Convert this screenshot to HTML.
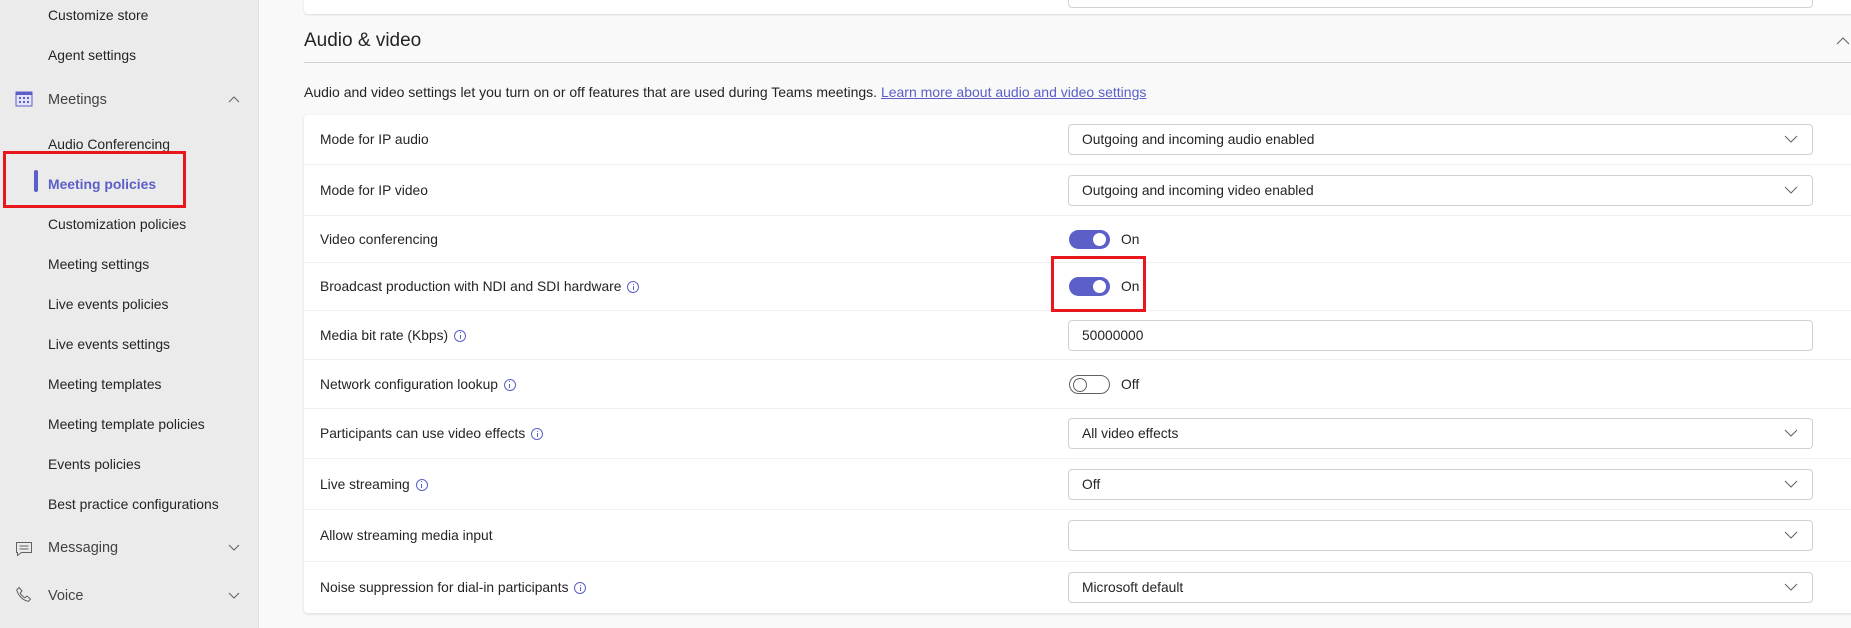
<!DOCTYPE html>
<html><head><meta charset="utf-8"><style>
*{box-sizing:border-box;margin:0;padding:0}
body{width:1851px;height:628px;overflow:hidden;font-family:"Liberation Sans",sans-serif;color:#242424;background:#f9f9f9;position:relative;font-size:14px}
.side{position:absolute;left:0;top:0;width:259px;height:628px;background:#ebebeb;border-right:1px solid #e0e0e0}
.si{position:absolute;left:48px;font-size:13.9px;color:#242424;line-height:18px}
.grp{font-size:14.5px;color:#424242}
.ic{position:absolute;left:15px}
.chev{position:absolute;left:228px}
.main{position:absolute;left:259px;top:0;right:0;bottom:0}
.topcard{position:absolute;left:45px;top:-10px;width:1600px;height:24px;background:#fff;border-radius:4px;box-shadow:0 1px 2px rgba(0,0,0,.12)}
.topdd{position:absolute;left:809px;top:-10px;width:745px;height:18px;border:1px solid #d1d1d1;border-radius:4px;background:#fff}
h2{position:absolute;left:45px;top:30px;font-size:19px;font-weight:normal;color:#242424}
.hl{position:absolute;left:45px;right:0;top:62px;border-top:1px solid #d1d1d1}
.desc{position:absolute;left:45px;top:84px;font-size:14px}
.desc a{color:#5b5fc7;text-decoration:underline}
.card{position:absolute;left:45px;top:115px;right:-10px;height:498px;background:#fff;border-radius:4px;box-shadow:0 1px 3px rgba(0,0,0,.12)}
.row{position:relative;border-bottom:1px solid #f0f0f0;display:flex;align-items:center}
.row:last-child{border-bottom:none}
.lbl{position:absolute;left:16px;font-size:13.8px}
.info{display:inline-block;width:12px;height:12px;border:1px solid #5b5fc7;border-radius:50%;vertical-align:-2px;margin-left:6px;position:relative}
.info:after{content:"";position:absolute;left:4.5px;top:4px;width:1px;height:4px;background:#5b5fc7}
.info:before{content:"";position:absolute;left:4.5px;top:1.5px;width:1px;height:1px;background:#5b5fc7}
.dd{position:absolute;left:764px;width:745px;height:31px;border:1px solid #d1d1d1;border-radius:4px;padding-left:13px;line-height:29px;font-size:13.8px}
.dd svg{position:absolute;right:14px;top:10px}
.tg{position:absolute;left:765px;width:41px;height:19px;border-radius:10px;background:#5b5fc7}
.tg:after{content:"";position:absolute;right:4px;top:3px;width:13px;height:13px;border-radius:50%;background:#fff}
.tg.off{background:#fff;border:1px solid #616161}
.tg.off:after{left:3px;right:auto;top:2px;background:#fff;border:1px solid #616161;width:12px;height:12px}
.tt{position:absolute;left:817px;font-size:13.8px}
.red{position:absolute;border:3px solid #e8161d}
</style></head><body>
<div class="side">
<div class="si" style="top:6px">Customize store</div>
<div class="si" style="top:46px">Agent settings</div>
<svg class="ic" style="top:90px" width="18" height="18" viewBox="0 0 18 18"><rect x="1" y="2" width="16" height="14" fill="#e4e4f7" stroke="#5b5fc7"/><rect x="1" y="2" width="16" height="3" fill="#5b5fc7"/><g fill="#5b5fc7"><rect x="4" y="7" width="2" height="2"/><rect x="8" y="7" width="2" height="2"/><rect x="12" y="7" width="2" height="2"/><rect x="4" y="11" width="2" height="2"/><rect x="8" y="11" width="2" height="2"/><rect x="12" y="11" width="2" height="2"/></g></svg>
<div class="si grp" style="top:91px">Meetings</div>
<svg class="chev" style="top:95px" width="12" height="8"><path d="M1 7L6 2L11 7" fill="none" stroke="#616161"/></svg>
<div class="si" style="top:135px">Audio Conferencing</div>
<div style="position:absolute;left:34px;top:170px;width:4px;height:22px;border-radius:2px;background:#5b5fc7"></div>
<div class="si" style="top:175px;color:#5b5fc7;font-weight:bold">Meeting policies</div>
<div class="si" style="top:215px">Customization policies</div>
<div class="si" style="top:255px">Meeting settings</div>
<div class="si" style="top:295px">Live events policies</div>
<div class="si" style="top:335px">Live events settings</div>
<div class="si" style="top:375px">Meeting templates</div>
<div class="si" style="top:415px">Meeting template policies</div>
<div class="si" style="top:455px">Events policies</div>
<div class="si" style="top:495px">Best practice configurations</div>
<svg class="ic" style="top:540px" width="18" height="18" viewBox="0 0 18 18"><path d="M1.5 2.5h15v10h-10l-4 3v-3h-1z" fill="none" stroke="#616161"/><path d="M4.5 6h9M4.5 9h9" stroke="#616161"/></svg>
<div class="si grp" style="top:539px">Messaging</div>
<svg class="chev" style="top:544px" width="12" height="8"><path d="M1 1L6 6L11 1" fill="none" stroke="#616161"/></svg>
<svg class="ic" style="top:586px" width="18" height="18" viewBox="0 0 18 18"><path d="M4 1.5l3 3.5-1.8 2c1 2 2.8 3.8 4.8 4.8l2-1.8 3.5 3-2 2.3C8 14.5 3.5 10 1.7 4z" fill="none" stroke="#616161"/></svg>
<div class="si grp" style="top:587px">Voice</div>
<svg class="chev" style="top:592px" width="12" height="8"><path d="M1 1L6 6L11 1" fill="none" stroke="#616161"/></svg>
<div class="red" style="left:3px;top:151px;width:183px;height:57px"></div>
</div>
<div class="main">
<div class="topcard"></div><div class="topdd" style="left:809px"></div>
<h2>Audio &amp; video</h2>
<svg style="position:absolute;left:1577px;top:36px" width="14" height="9"><path d="M1 8L7 2L13 8" fill="none" stroke="#616161"/></svg>
<div class="hl"></div>
<div class="desc">Audio and video settings let you turn on or off features that are used during Teams meetings. <a>Learn more about audio and video settings</a></div>
<div class="card">
<div class="row" style="height:50px"><span class="lbl">Mode for IP audio</span><div class="dd">Outgoing and incoming audio enabled<svg width="14" height="8"><path d="M1 1L7 7L13 1" fill="none" stroke="#616161"/></svg></div></div>
<div class="row" style="height:51px"><span class="lbl">Mode for IP video</span><div class="dd">Outgoing and incoming video enabled<svg width="14" height="8"><path d="M1 1L7 7L13 1" fill="none" stroke="#616161"/></svg></div></div>
<div class="row" style="height:47px"><span class="lbl">Video conferencing</span><div class="tg"></div><span class="tt">On</span></div>
<div class="row" style="height:48px"><span class="lbl">Broadcast production with NDI and SDI hardware<span class="info"></span></span><div class="tg"></div><span class="tt">On</span></div>
<div class="row" style="height:49px"><span class="lbl">Media bit rate (Kbps)<span class="info"></span></span><div class="dd">50000000</div></div>
<div class="row" style="height:49px"><span class="lbl">Network configuration lookup<span class="info"></span></span><div class="tg off"></div><span class="tt">Off</span></div>
<div class="row" style="height:50px"><span class="lbl">Participants can use video effects<span class="info"></span></span><div class="dd">All video effects<svg width="14" height="8"><path d="M1 1L7 7L13 1" fill="none" stroke="#616161"/></svg></div></div>
<div class="row" style="height:51px"><span class="lbl">Live streaming<span class="info"></span></span><div class="dd">Off<svg width="14" height="8"><path d="M1 1L7 7L13 1" fill="none" stroke="#616161"/></svg></div></div>
<div class="row" style="height:52px"><span class="lbl">Allow streaming media input</span><div class="dd"><svg width="14" height="8"><path d="M1 1L7 7L13 1" fill="none" stroke="#616161"/></svg></div></div>
<div class="row" style="height:51px"><span class="lbl">Noise suppression for dial-in participants<span class="info"></span></span><div class="dd">Microsoft default<svg width="14" height="8"><path d="M1 1L7 7L13 1" fill="none" stroke="#616161"/></svg></div></div>
</div>
<div class="red" style="left:792px;top:256px;width:95px;height:56px"></div>
</div>
</body></html>
